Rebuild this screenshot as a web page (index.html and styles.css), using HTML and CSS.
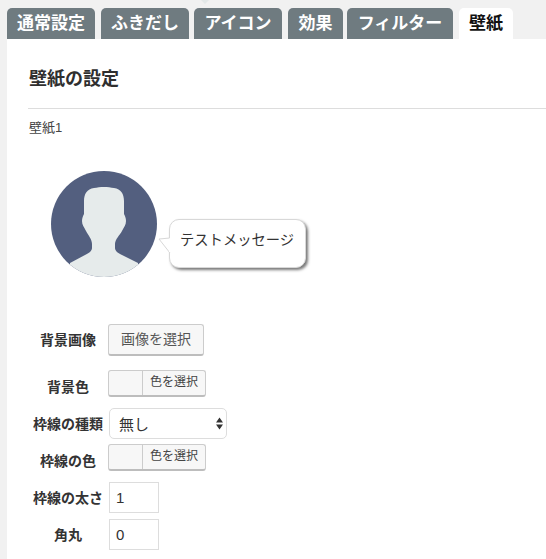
FILE: index.html
```html
<!DOCTYPE html>
<html lang="ja">
<head>
<meta charset="utf-8">
<title>壁紙の設定</title>
<link rel="stylesheet" href="styles.css">
</head>
<body>
<div class="notch"></div>
<nav class="tabs">
  <a class="tab t1">通常設定</a>
  <a class="tab t2">ふきだし</a>
  <a class="tab t3">アイコン</a>
  <a class="tab t4">効果</a>
  <a class="tab t5">フィルター</a>
  <a class="tab t6 active">壁紙</a>
</nav>
<main class="panel">
  <h2 class="title">壁紙の設定</h2>
  <p class="sub">壁紙1</p>
  <div class="preview">
    <svg class="avatar" width="106" height="106" viewBox="0 0 106 106">
      <defs><clipPath id="c"><circle cx="53" cy="53" r="53"/></clipPath></defs>
      <circle cx="53" cy="53" r="53" fill="#535f7f"/>
      <path clip-path="url(#c)" fill="#e6ebeb" d="M43 17C36 18 33 23 33 30L33 43C32 45 31 47 31 50C31 54 33 56 35 60C37 64 41 68 41 73L41 77C41 80 38 82 34 84L19 92L19 110L87 110L87 92L71 84C67 82 64 80 64 77L64 73C64 68 69 64 71 60C73 56 75 54 75 50C75 47 74 45 73 43L73 30C73 23 70 18 63 17C57 15.500 49 15.500 43 17Z"/>
    </svg>
    <div class="bubble">
      <svg class="tail" width="13" height="17" viewBox="0 0 13 17"><path fill="#fff" stroke="#d8d8d8" d="M12 1L1 2L12 16"/><path fill="#fff" d="M11 1.500H13V15H11Z"/></svg>
      テストメッセージ
    </div>
  </div>
  <form class="form">
    <div class="row r-image">
      <label class="lbl">背景画像</label>
      <button type="button" class="btn">画像を選択</button>
    </div>
    <div class="row r-color">
      <label class="lbl lbl-low">背景色</label>
      <div class="picker"><span class="swatch"></span><span class="pick">色を選択</span></div>
    </div>
    <div class="row r-select">
      <label class="lbl">枠線の種類</label>
      <div class="select"><span>無し</span>
        <svg width="7" height="13" viewBox="0 0 7 13"><path fill="#333" d="M3.500 0.500L7 5.500L0 5.500ZM3.500 12.500L0 7.500L7 7.500Z"/></svg>
      </div>
    </div>
    <div class="row r-bcolor">
      <label class="lbl lbl-low">枠線の色</label>
      <div class="picker"><span class="swatch"></span><span class="pick">色を選択</span></div>
    </div>
    <div class="row r-num">
      <label class="lbl">枠線の太さ</label>
      <div class="num">1</div>
    </div>
    <div class="row r-num2">
      <label class="lbl">角丸</label>
      <div class="num">0</div>
    </div>
  </form>
</main>
</body>
</html>
```
FILE: styles.css
```css
* { box-sizing: border-box; }
html, body { margin: 0; height: 559px; overflow: hidden; }
body {
  background: #f1f1f1;
  font-family: "Liberation Sans", "Noto Sans CJK JP", sans-serif;
  color: #333;
  position: relative;
}
.notch {
  position: absolute;
  left: 201px;
  top: 0;
  width: 0;
  height: 0;
  border: 4px solid transparent;
  border-top-color: #e3e8e8;
}
.tabs { display: flex; padding: 8px 0 0 7px; height: 39px; }
.tab {
  height: 31px;
  background: #6f7b80;
  color: #fff;
  font-size: 17px;
  font-weight: 700;
  line-height: 31px;
  text-align: center;
  border-radius: 5px 5px 0 0;
}
.t1 { width: 88px; margin-right: 6px; }
.t2 { width: 88px; margin-right: 5px; }
.t3 { width: 88px; margin-right: 6px; }
.t4 { width: 55px; margin-right: 4px; }
.t5 { width: 106px; margin-right: 6px; }
.t6 { width: 54px; }
.tab.active { background: #fff; color: #111; }
.panel { margin-left: 7px; height: 520px; background: #fff; padding: 0 0 0 21px; }
.title {
  margin: 0;
  height: 70px;
  padding-top: 29px;
  font-size: 18px;
  line-height: 22px;
  font-weight: 700;
  border-bottom: 1px solid #dddddd;
  padding-left: 1px;
  color: #2f2f2f;
}
.sub { margin: 0; padding: 10px 0 0 1px; font-size: 13px; line-height: 18px; color: #444; }
.preview { display: flex; align-items: flex-start; padding: 34px 0 0 23px; height: 187px; }
.avatar { flex: none; display: block; }
.bubble {
  position: relative;
  margin: 48px 0 0 12px;
  width: 137px;
  height: 49px;
  padding: 10px 0 0 10px;
  background: #fff;
  border: 1px solid #d8d8d8;
  border-radius: 10px;
  box-shadow: 2px 2px 3px #777;
  font-size: 14.300px;
  line-height: 20px;
  color: #333;
}
.tail { position: absolute; left: -12px; top: 17px; display: block; }
.form { display: block; }
.row { display: flex; align-items: center; }
.lbl { width: 80px; flex: none; text-align: center; font-size: 14px; line-height: 20px; font-weight: 700; color: #333; white-space: nowrap; display: block; }
.lbl-low { padding-top: 7px; }
.btn {
  display: block;
  width: 96px;
  height: 32px;
  padding: 0 0 3px;
  border: 1px solid #ccc;
  border-bottom: 2px solid #bdbdbd;
  border-radius: 3px;
  background: #f7f7f7;
  font: 14px "Liberation Sans", "Noto Sans CJK JP", sans-serif;
  color: #555;
}
.picker {
  width: 98px;
  height: 27px;
  display: flex;
  border: 1px solid #ccc;
  border-bottom: 2px solid #bdbdbd;
  border-radius: 3px;
  background: #f7f7f7;
  overflow: hidden;
}
.swatch { width: 34px; border-right: 1px solid #ccc; }
.pick { flex: 1; text-align: center; font-size: 12px; line-height: 22px; color: #444; }
.select {
  width: 118px;
  height: 31px;
  margin-left: 1px;
  padding: 0 3px 0 9px;
  display: flex;
  align-items: center;
  justify-content: space-between;
  border: 1px solid #ddd;
  border-radius: 5px;
  background: #fff;
  font-size: 15px;
  color: #333;
}
.num {
  width: 50px;
  height: 31px;
  margin-left: 1px;
  padding-left: 6px;
  border: 1px solid #ddd;
  background: #fff;
  font-size: 15px;
  line-height: 29px;
  color: #333;
}
.r-color { margin-top: 14px; }
.r-select { margin-top: 11px; }
.r-bcolor { margin-top: 5px; }
.r-num { margin-top: 11px; }
.r-num2 { margin-top: 6px; }
```
